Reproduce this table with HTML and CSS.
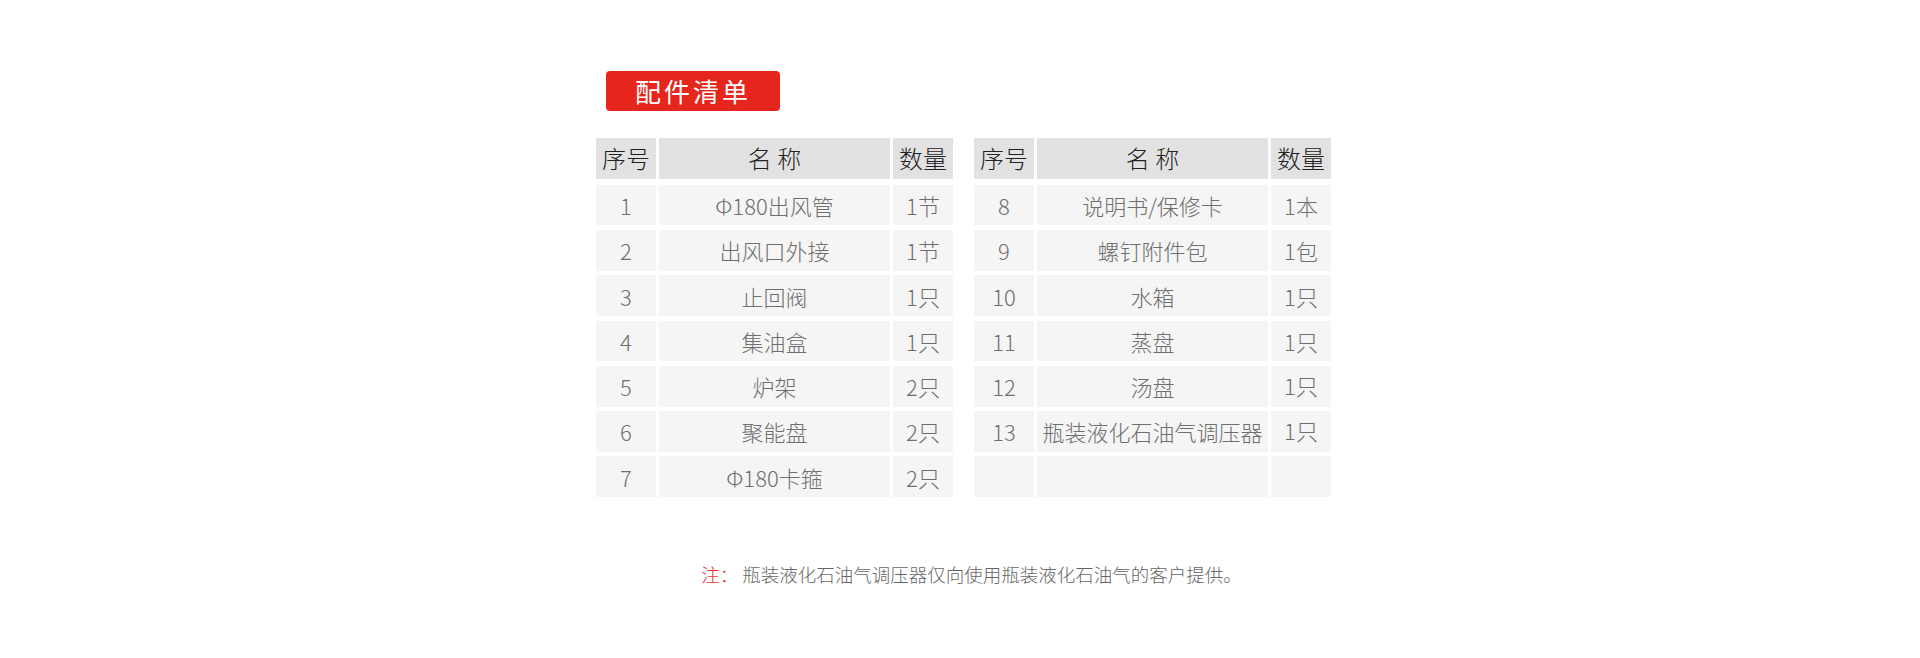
FILE: index.html
```html
<!DOCTYPE html>
<html lang="zh-CN">
<head>
<meta charset="utf-8">
<title>配件清单</title>
<link rel="stylesheet" href="styles.css">
</head>
<body>
<div class="wrap">
  <div class="badge">配件清单</div>
  <div class="tables">
    <div class="table">
      <div class="row head"><div class="c">序号</div><div class="c">名 称</div><div class="c">数量</div></div>
      <div class="tbody">
        <div class="row"><div class="c">1</div><div class="c">Φ180出风管</div><div class="c">1节</div></div>
        <div class="row"><div class="c">2</div><div class="c">出风口外接</div><div class="c">1节</div></div>
        <div class="row"><div class="c">3</div><div class="c">止回阀</div><div class="c">1只</div></div>
        <div class="row"><div class="c">4</div><div class="c">集油盒</div><div class="c">1只</div></div>
        <div class="row"><div class="c">5</div><div class="c">炉架</div><div class="c">2只</div></div>
        <div class="row"><div class="c">6</div><div class="c">聚能盘</div><div class="c">2只</div></div>
        <div class="row"><div class="c">7</div><div class="c">Φ180卡箍</div><div class="c">2只</div></div>
      </div>
    </div>
    <div class="table">
      <div class="row head"><div class="c">序号</div><div class="c">名 称</div><div class="c">数量</div></div>
      <div class="tbody">
        <div class="row"><div class="c">8</div><div class="c">说明书/保修卡</div><div class="c">1本</div></div>
        <div class="row"><div class="c">9</div><div class="c">螺钉附件包</div><div class="c">1包</div></div>
        <div class="row"><div class="c">10</div><div class="c">水箱</div><div class="c">1只</div></div>
        <div class="row"><div class="c">11</div><div class="c">蒸盘</div><div class="c">1只</div></div>
        <div class="row"><div class="c">12</div><div class="c">汤盘</div><div class="c up">1只</div></div>
        <div class="row"><div class="c">13</div><div class="c">瓶装液化石油气调压器</div><div class="c up">1只</div></div>
        <div class="row"><div class="c"></div><div class="c"></div><div class="c"></div></div>
      </div>
    </div>
  </div>
  <p class="note"><span class="red">注：</span>瓶装液化石油气调压器仅向使用瓶装液化石油气的客户提供。</p>
</div>
</body>
</html>
```

FILE: styles.css
```css
html, body {
  margin: 0;
  padding: 0;
  background: #ffffff;
}
body {
  font-family: "Noto Sans CJK SC", "Noto Sans", sans-serif;
  height: 658px;
  overflow: hidden;
}
.wrap {
  width: 735px;
  margin: 0 auto;
  padding: 71px 0 0 0;
  position: relative;
  left: 3.5px;
}
.badge {
  width: 174px;
  height: 40px;
  margin-left: 10px;
  background: #e6261c;
  border-radius: 4px;
  color: #ffffff;
  font-size: 26px;
  font-weight: 400;
  letter-spacing: 3px;
  line-height: 40px;
  text-align: center;
}
.tables {
  display: flex;
  gap: 21px;
  margin-top: 27px;
}
.table {
  display: flex;
  flex-direction: column;
  width: 357px;
}
.row {
  display: grid;
  grid-template-columns: 60px 231px 60px;
  column-gap: 3px;
  height: 40.7px;
}
.tbody {
  display: flex;
  flex-direction: column;
  gap: 4.6px;
  margin-top: 6px;
}
.c {
  background: #f5f5f5;
  display: flex;
  align-items: center;
  justify-content: center;
  font-size: 22px;
  font-weight: 300;
  color: #6e6e6e;
  white-space: nowrap;
  line-height: 1;
}
.head .c {
  background: #e2e2e2;
  font-size: 24px;
  font-weight: 300;
  color: #222222;
}
.c.up {
  padding-bottom: 3px;
  box-sizing: border-box;
}
.note {
  margin: 65px 0 0 0;
  padding-left: 16px;
  font-size: 18.5px;
  line-height: 24px;
  color: #666666;
  text-align: center;
  font-weight: 300;
}
.red {
  color: #e8322b;
  margin-right: 4px;
}
```
